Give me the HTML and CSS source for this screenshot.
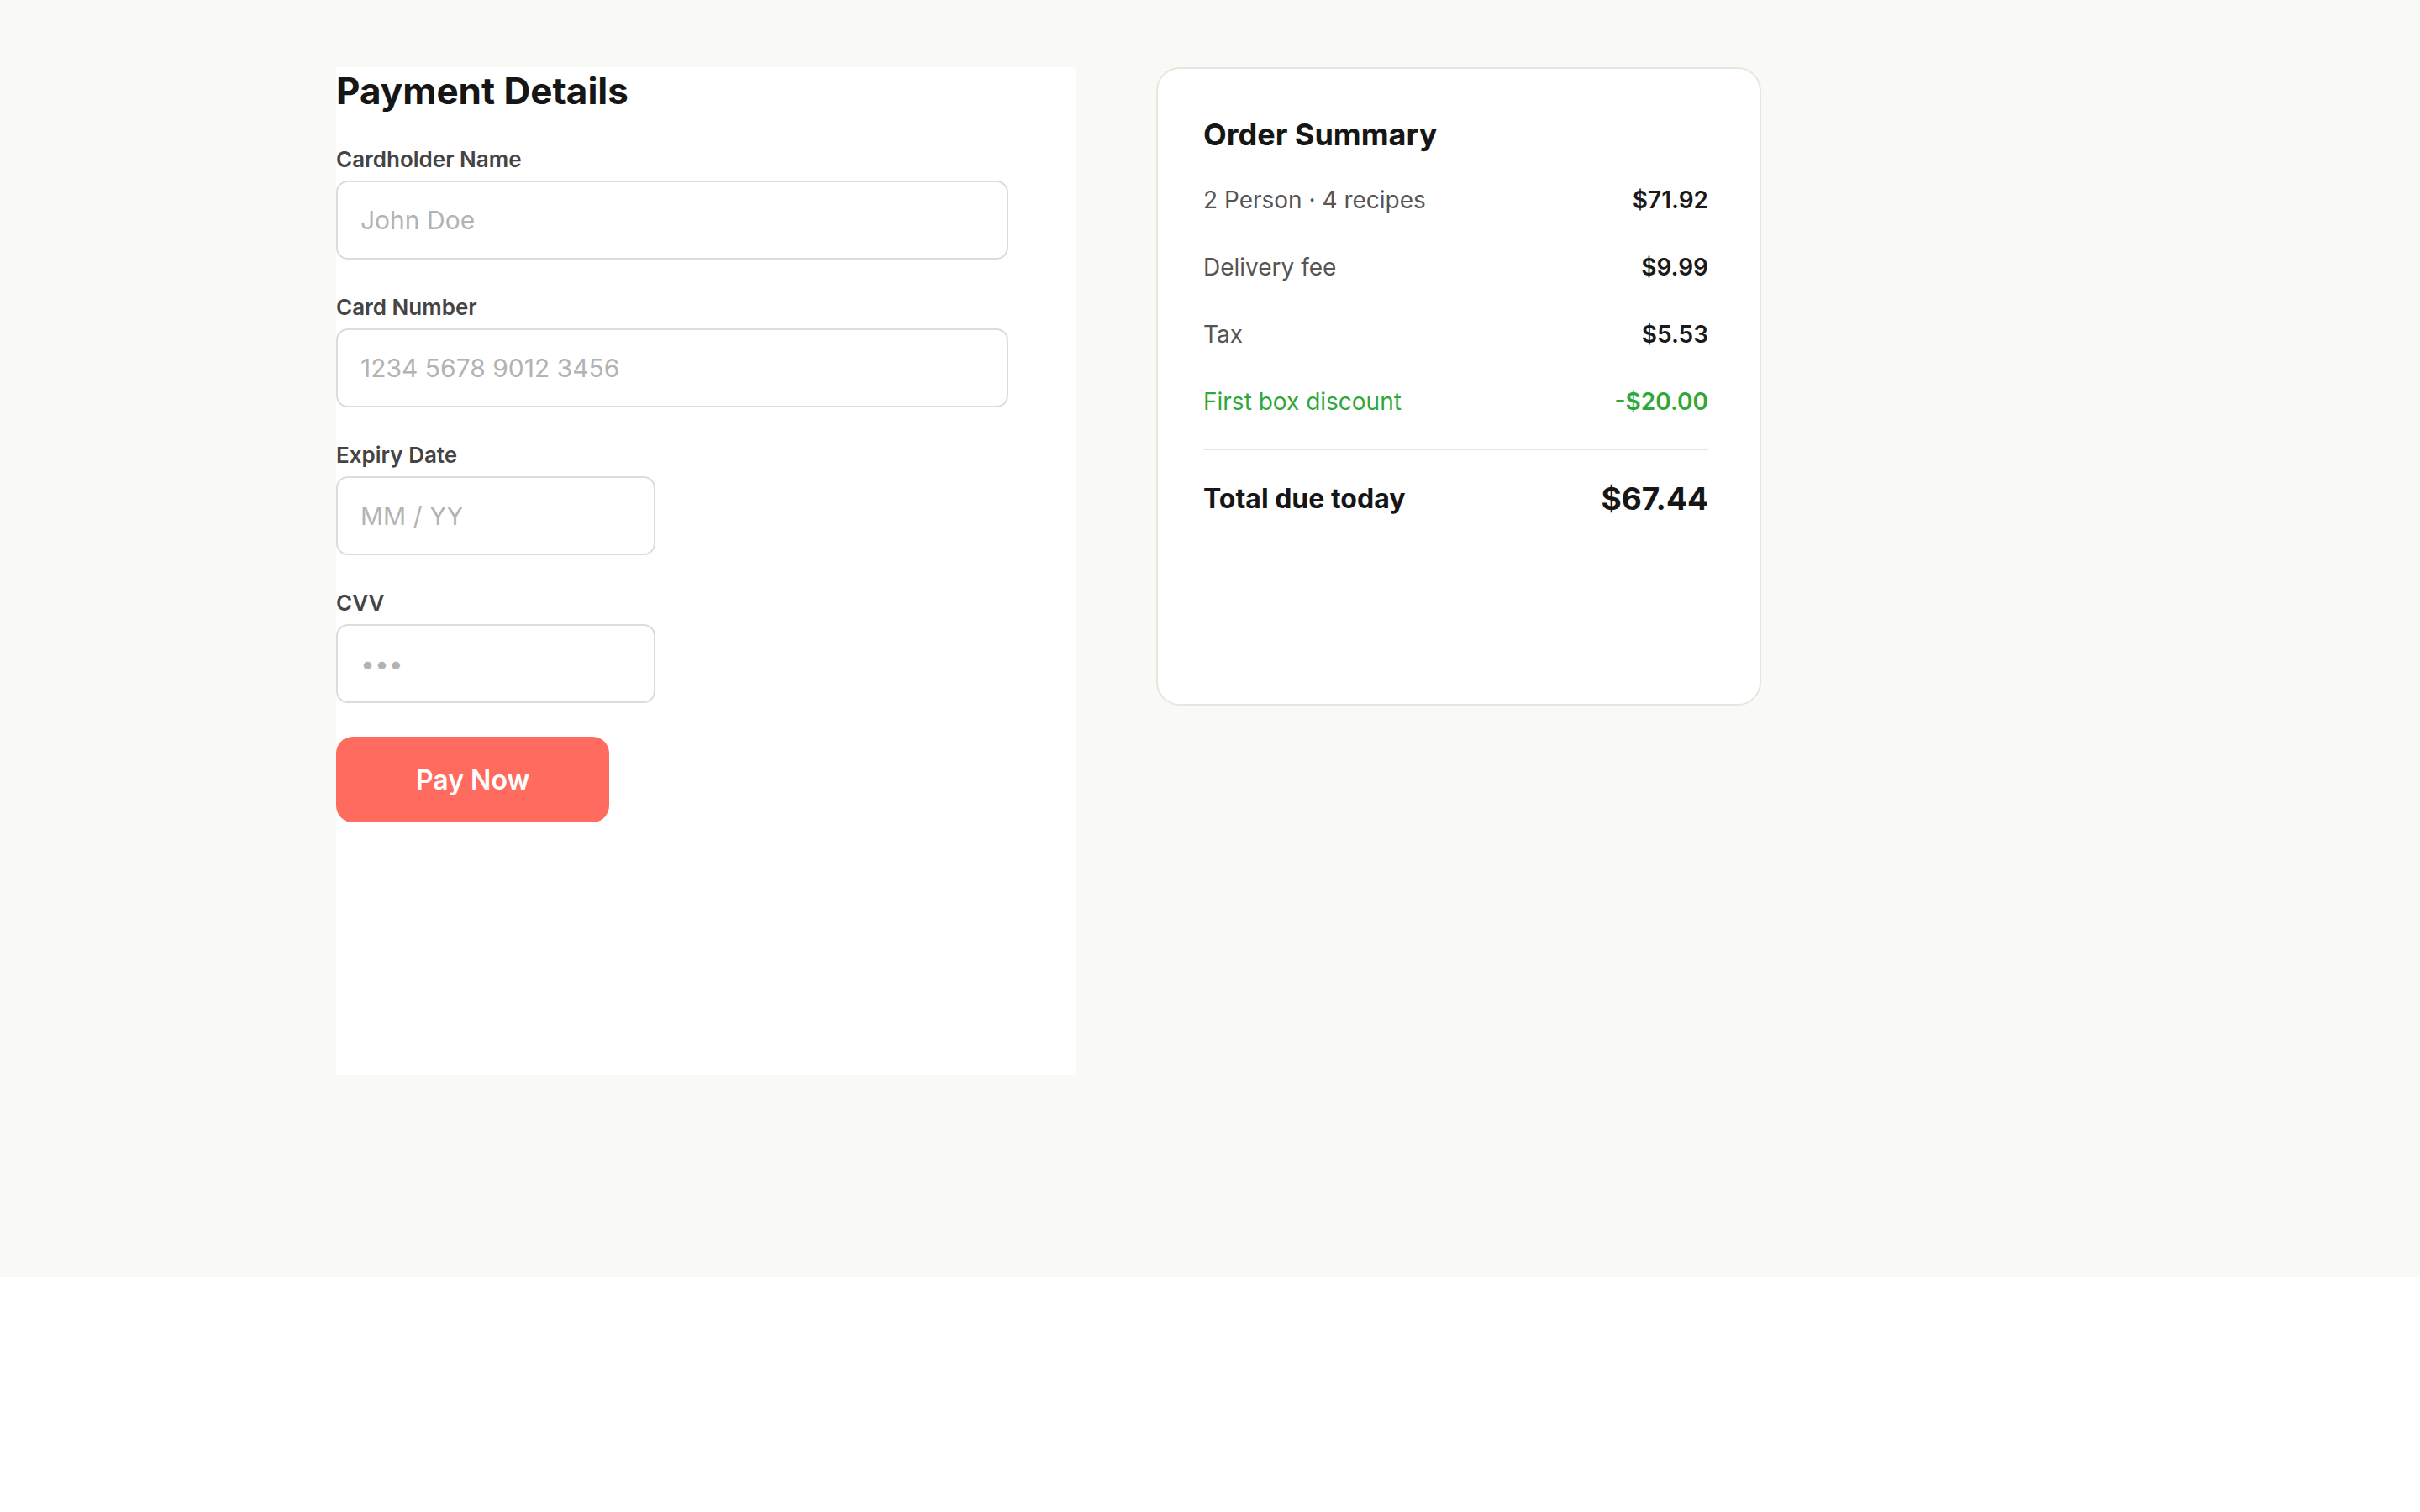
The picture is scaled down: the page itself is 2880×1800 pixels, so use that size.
FILE: index.html
```html
<!DOCTYPE html>
<html lang="en">
<head>
<meta charset="utf-8">
<title>Checkout</title>
<link rel="stylesheet" href="styles.css">
</head>
<body>
<main class="page">
  <section class="payment">
    <h1 class="payment-title">Payment Details</h1>
    <div class="field">
      <label class="field-label" for="name">Cardholder Name</label>
      <input class="field-input" id="name" type="text" placeholder="John Doe">
    </div>
    <div class="field">
      <label class="field-label" for="card">Card Number</label>
      <input class="field-input" id="card" type="text" placeholder="1234 5678 9012 3456">
    </div>
    <div class="field">
      <label class="field-label" for="exp">Expiry Date</label>
      <input class="field-input field-input--short" id="exp" type="text" placeholder="MM / YY">
    </div>
    <div class="field">
      <label class="field-label" for="cvv">CVV</label>
      <input class="field-input field-input--short" id="cvv" type="password" placeholder="•••">
    </div>
    <button class="pay-btn" type="button">Pay Now</button>
  </section>
  <aside class="summary">
    <h2 class="summary-title">Order Summary</h2>
    <div class="summary-row"><span class="summary-label">2 Person · 4 recipes</span><span class="summary-value">$71.92</span></div>
    <div class="summary-row"><span class="summary-label">Delivery fee</span><span class="summary-value">$9.99</span></div>
    <div class="summary-row"><span class="summary-label">Tax</span><span class="summary-value">$5.53</span></div>
    <div class="summary-row summary-row--discount"><span class="summary-label">First box discount</span><span class="summary-value">-$20.00</span></div>
    <div class="summary-total"><span class="total-label">Total due today</span><span class="total-value">$67.44</span></div>
  </aside>
</main>
</body>
</html>
```
FILE: styles.css
```css
* { box-sizing: border-box; }
html, body { margin: 0; padding: 0; background: #ffffff; }
body { font-family: Inter, "Noto Sans", "Liberation Sans", sans-serif; color: #1a1a1a; }

.page {
  background: #f9faf5;
  display: flex;
  align-items: flex-start;
  gap: 96px;
  padding: 80px 0 240px 400px;
}

.payment {
  width: 880px;
  height: 1200px;
  background: #ffffff;
  display: flex;
  flex-direction: column;
  align-items: flex-start;
}

.payment-title {
  margin: 0 0 37px;
  font-size: 44px;
  line-height: 56px;
  font-weight: 700;
  color: #161616;
}

.field { display: flex; flex-direction: column; margin-bottom: 40px; }

.field-label {
  font-size: 26px;
  line-height: 34px;
  font-weight: 600;
  color: #444444;
  margin-bottom: 8px;
}

.field-input {
  width: 800px;
  height: 94px;
  padding: 0 27px;
  border: 2px solid #dcdcdc;
  border-radius: 14px;
  font-family: inherit;
  font-size: 30px;
  color: #1a1a1a;
  background: #ffffff;
  outline: none;
}
.field-input::placeholder { color: #b3b3b3; }
.field-input--short { width: 380px; }

.pay-btn {
  height: 102px;
  padding: 0 95px;
  border: none;
  border-radius: 20px;
  background: #ff6b5e;
  color: #ffffff;
  font-family: inherit;
  font-size: 32px;
  font-weight: 600;
}

.summary {
  width: 720px;
  height: 760px;
  background: #ffffff;
  border: 2px solid #e6e6e3;
  border-radius: 28px;
  padding: 56px 61px 56px 54px;
}

.summary-title {
  margin: 0 0 16px;
  font-size: 36px;
  line-height: 44px;
  font-weight: 700;
  color: #161616;
}

.summary-row {
  display: flex;
  justify-content: space-between;
  padding: 20px 0;
  font-size: 28px;
  line-height: 40px;
}
.summary-label { color: #555555; }
.summary-value { font-weight: 600; color: #1a1a1a; }
.summary-row--discount .summary-label,
.summary-row--discount .summary-value { color: #2ea83a; }

.summary-total {
  display: flex;
  justify-content: space-between;
  align-items: center;
  margin-top: 16px;
  padding-top: 32px;
  border-top: 2px solid #e6e6e6;
  line-height: 52px;
}
.total-label { font-size: 32px; font-weight: 700; color: #161616; }
.total-value { font-size: 37px; font-weight: 700; color: #161616; }
```
